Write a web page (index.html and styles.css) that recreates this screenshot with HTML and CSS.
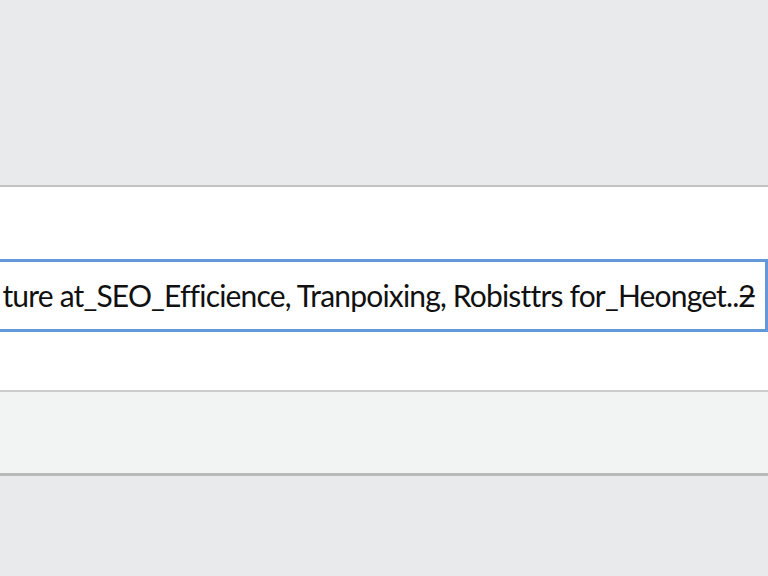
FILE: index.html
```html
<!DOCTYPE html>
<html lang="en">
<head>
  <meta charset="UTF-8">
  <meta name="viewport" content="width=device-width, initial-scale=1.0">
  <title>Search field</title>
  <link rel="stylesheet" href="styles.css">
</head>
<body>

  <!-- top toolbar area -->
  <div class="top-band"></div>

  <!-- main field panel -->
  <div class="field-panel">
    <div class="input-box">
      <span class="input-text">ture at_SEO_Efficience, Tranpoixing, Robisttrs for_Heonget..ƻ</span>
    </div>
  </div>

  <div class="sub-panel"></div>
  <div class="bottom-band"></div>

</body>
</html>
```

FILE: styles.css
```css
body {
  font-family: Lato, 'Open Sans', sans-serif;
  margin: 0;
  padding: 0;
  background: #e9eaec;
  color: #111;
  height: 576px;
  overflow: hidden;
}

.top-band {
  height: 185px;
  background: #e9eaeb;
}

.field-panel {
  height: 203px;
  background: #ffffff;
  border-top: 2px solid #c3c3c3;
  border-bottom: 2px solid #cdcdcd;
  display: flex;
  align-items: center;
}

.input-box {
  flex: none;
  box-sizing: border-box;
  width: 772px;
  height: 73px;
  margin-left: -4px;
  margin-top: 14px;
  border: 3px solid #6498dc;
  background: #fff;
  display: flex;
  justify-content: flex-end;
  align-items: center;
  overflow: hidden;
  padding-right: 10px;
  padding-bottom: 1px;
}

.input-text {
  white-space: nowrap;
  font-size: 30px;
  letter-spacing: -0.82px;
  font-variant-ligatures: none;
}

.sub-panel {
  height: 81px;
  background: #f2f3f3;
  border-bottom: 3px solid #b9b9b9;
}

.bottom-band {
  height: 100px;
  background: #e9eaec;
}
```
